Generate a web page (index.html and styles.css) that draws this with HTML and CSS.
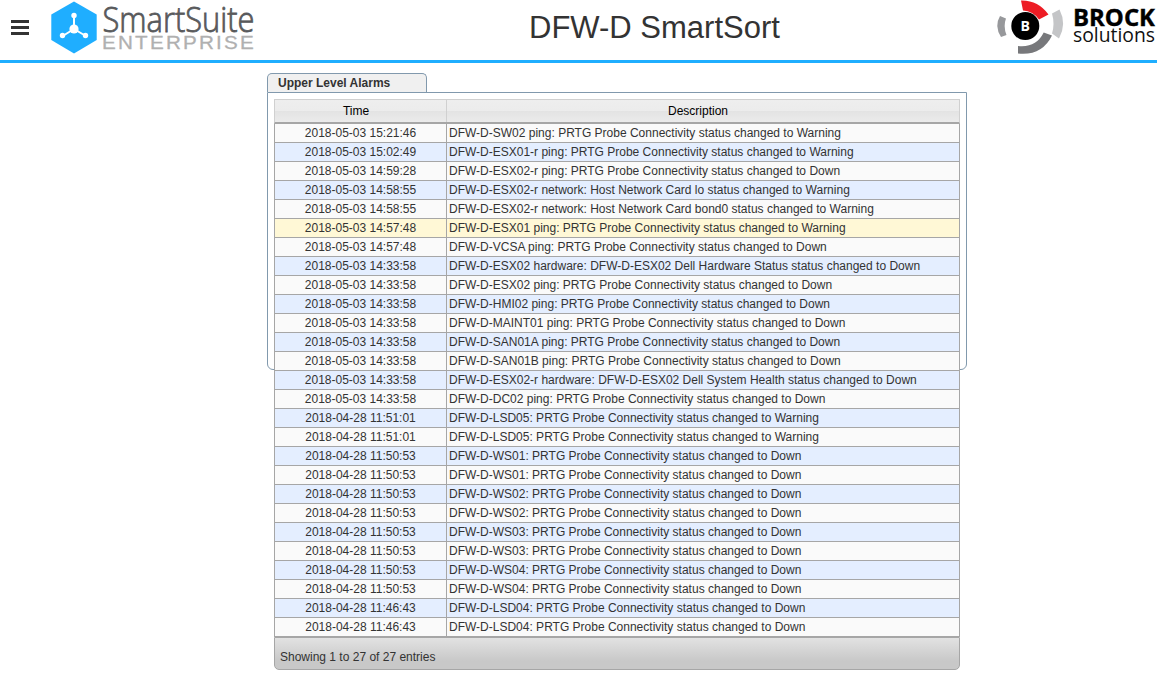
FILE: index.html
```
<!DOCTYPE html>
<html lang="en">
<head>
<meta charset="utf-8">
<title>DFW-D SmartSort</title>
<link rel="stylesheet" href="styles.css">
</head>
<body>
<header class="topbar">
  <div class="brand">
    <svg class="menu" width="18" height="16" viewBox="0 0 18 16"><path d="M0 0h18v3H0zM0 6h18v3H0zM0 12h18v3H0z" fill="#333"/></svg>
    <svg class="suite-logo" width="206" height="56" viewBox="0 0 206 56">
      <path d="M24 1.500 46.700 14.500V40L24 53.500 1.300 40V14.500Z" fill="#1faeff"/>
      <path d="M24 16V29M24 29 13.500 35.500M24 29 35 35.500" stroke="#fff" stroke-width="2" fill="none"/>
      <circle cx="24" cy="29" r="4.600" fill="#fff"/>
      <circle cx="24" cy="15.500" r="2.700" fill="#fff"/>
      <circle cx="12.500" cy="35.500" r="2.700" fill="#fff"/>
      <circle cx="35.500" cy="35.500" r="2.700" fill="#fff"/>
      <text class="suite-name" x="52.500" y="31.500" textLength="152" lengthAdjust="spacingAndGlyphs">SmartSuite</text>
      <text class="suite-edition" x="52" y="48.500" textLength="154" lengthAdjust="spacingAndGlyphs">ENTERPRISE</text>
    </svg>
  </div>
  <h1 class="title">DFW-D SmartSort</h1>
  <svg class="brock-logo" width="165" height="56" viewBox="0 0 165 56">
    <path d="M29 .5Q46 0 56.500 14.500L47 19.500Q41 11 31 10.500Z" fill="#ed1c24"/>
    <path d="M67.500 9.500Q75 24 67 38.500L60 33.500Q63 24 60 13.500Z" fill="#c4c5c7"/>
    <path d="M51.700 32.500 60 35.500Q50 56 26 53.500V46Q44 48 51.700 32.500Z" fill="#77787b"/>
    <path d="M8 16 14 18.500Q11 26 14.500 35L9 37Q2 26 8 16Z" fill="#97989b"/>
    <circle cx="33.300" cy="26" r="14" fill="#000"/>
    <text class="brock-badge" x="28.500" y="31">B</text>
    <text class="brock-name" x="81" y="26" textLength="82" lengthAdjust="spacingAndGlyphs">BROCK</text>
    <text class="brock-sub" x="81" y="42" textLength="82" lengthAdjust="spacingAndGlyphs">solutions</text>
  </svg>
</header>
<main class="page">
  <div class="tab">Upper Level Alarms</div>
  <section class="panel">
    <div class="grid">
      <div class="row head"><span class="time">Time</span><span class="desc">Description</span></div>
      <div id="rows"></div>
      <div class="foot">Showing 1 to 27 of 27 entries</div>
    </div>
  </section>
</main>
<script src="rows.js"></script>
</body>
</html>
```
FILE: styles.css
```
body { margin: 0; min-height: 682px; background: #fff; color: #333; font: 12px "Liberation Sans", Arial, sans-serif; }
.topbar { display: grid; grid-template-columns: 529px auto 1fr; height: 60px; border-bottom: 3px solid #1faeff; }
.brand { display: flex; align-items: flex-start; }
.menu { margin: 20px 0 0 11px; }
.suite-logo { margin-left: 21px; overflow: visible; }
.suite-name { font: 300 34px "Open Sans", sans-serif; fill: #58595b; stroke: #58595b; stroke-width: .8px; }
.suite-edition { font: 18.5px "Liberation Sans", sans-serif; letter-spacing: 2px; fill: #b0b0b0; stroke: #b0b0b0; stroke-width: .3px; }
.title { margin: 0; padding-top: 10px; font-size: 31px; line-height: 36px; font-weight: 400; white-space: nowrap; }
.brock-logo { justify-self: end; }
.brock-badge { font: bold 14px "Open Sans", sans-serif; fill: #fff; }
.brock-name { font: 700 24px "Open Sans", sans-serif; fill: #000; stroke: #000; stroke-width: .4px; }
.brock-sub { font: 20px "Open Sans", sans-serif; fill: #111; }
.page { width: 700px; margin: 10px 0 0 267px; }
.tab { box-sizing: border-box; width: 160px; height: 19px; padding-left: 10px; border: 1px solid #8199ad; border-bottom: 0; border-radius: 5px 5px 0 0; background: #f0f0f0; font-weight: 700; line-height: 18px; }
.panel { box-sizing: border-box; height: 278px; padding: 6px; border: 1px solid #8199ad; border-radius: 0 0 6px 6px; }
.grid { width: 686px; background: #fff; }
.row { box-sizing: border-box; display: flex; height: 19px; line-height: 19px; border: solid #a6a6a6; border-width: 0 1px 1px; background: #fafafa; white-space: nowrap; }
.row.alt { background: #e4eeff; }
.row.hover { background: #fff8d6; }
.time { box-sizing: border-box; width: 172px; height: 100%; border-right: 1px solid #a6a6a6; text-align: center; }
.desc { flex: 1; padding-left: 2px; }
.row.head { height: 25px; line-height: 23px; color: #000; border: 1px solid #d0d0d0; border-bottom: 2px solid #a6a6a6; background: linear-gradient(#eee 0, #ececec 50%, #e3e3e3 50%, #ebebeb 100%); }
.head .time { border-color: #d0d0d0; padding-right: 9px; }
.head .desc { text-align: center; padding-right: 12px; }
.foot { box-sizing: border-box; height: 33px; border: 1px solid #a6a6a6; border-radius: 0 0 5px 5px; background: linear-gradient(#e2e2e2, #c8c8c8 75%); padding-left: 5px; line-height: 38px; }
```
FILE: rows.js
```
const alarms = [
  ["2018-05-03 15:21:46", "DFW-D-SW02 ping: PRTG Probe Connectivity status changed to Warning"],
  ["2018-05-03 15:02:49", "DFW-D-ESX01-r ping: PRTG Probe Connectivity status changed to Warning"],
  ["2018-05-03 14:59:28", "DFW-D-ESX02-r ping: PRTG Probe Connectivity status changed to Down"],
  ["2018-05-03 14:58:55", "DFW-D-ESX02-r network: Host Network Card lo status changed to Warning"],
  ["2018-05-03 14:58:55", "DFW-D-ESX02-r network: Host Network Card bond0 status changed to Warning"],
  ["2018-05-03 14:57:48", "DFW-D-ESX01 ping: PRTG Probe Connectivity status changed to Warning"],
  ["2018-05-03 14:57:48", "DFW-D-VCSA ping: PRTG Probe Connectivity status changed to Down"],
  ["2018-05-03 14:33:58", "DFW-D-ESX02 hardware: DFW-D-ESX02 Dell Hardware Status status changed to Down"],
  ["2018-05-03 14:33:58", "DFW-D-ESX02 ping: PRTG Probe Connectivity status changed to Down"],
  ["2018-05-03 14:33:58", "DFW-D-HMI02 ping: PRTG Probe Connectivity status changed to Down"],
  ["2018-05-03 14:33:58", "DFW-D-MAINT01 ping: PRTG Probe Connectivity status changed to Down"],
  ["2018-05-03 14:33:58", "DFW-D-SAN01A ping: PRTG Probe Connectivity status changed to Down"],
  ["2018-05-03 14:33:58", "DFW-D-SAN01B ping: PRTG Probe Connectivity status changed to Down"],
  ["2018-05-03 14:33:58", "DFW-D-ESX02-r hardware: DFW-D-ESX02 Dell System Health status changed to Down"],
  ["2018-05-03 14:33:58", "DFW-D-DC02 ping: PRTG Probe Connectivity status changed to Down"],
  ["2018-04-28 11:51:01", "DFW-D-LSD05: PRTG Probe Connectivity status changed to Warning"],
  ["2018-04-28 11:51:01", "DFW-D-LSD05: PRTG Probe Connectivity status changed to Warning"],
  ...["WS01", "WS01", "WS02", "WS02", "WS03", "WS03", "WS04", "WS04"].map(h => ["2018-04-28 11:50:53", `DFW-D-${h}: PRTG Probe Connectivity status changed to Down`]),
  ["2018-04-28 11:46:43", "DFW-D-LSD04: PRTG Probe Connectivity status changed to Down"],
  ["2018-04-28 11:46:43", "DFW-D-LSD04: PRTG Probe Connectivity status changed to Down"]
];
document.getElementById("rows").innerHTML = alarms.map(([time, desc], i) =>
  `<div class="row${i === 5 ? " hover" : i % 2 ? " alt" : ""}"><span class="time">${time}</span><span class="desc">${desc}</span></div>`
).join("");
```
